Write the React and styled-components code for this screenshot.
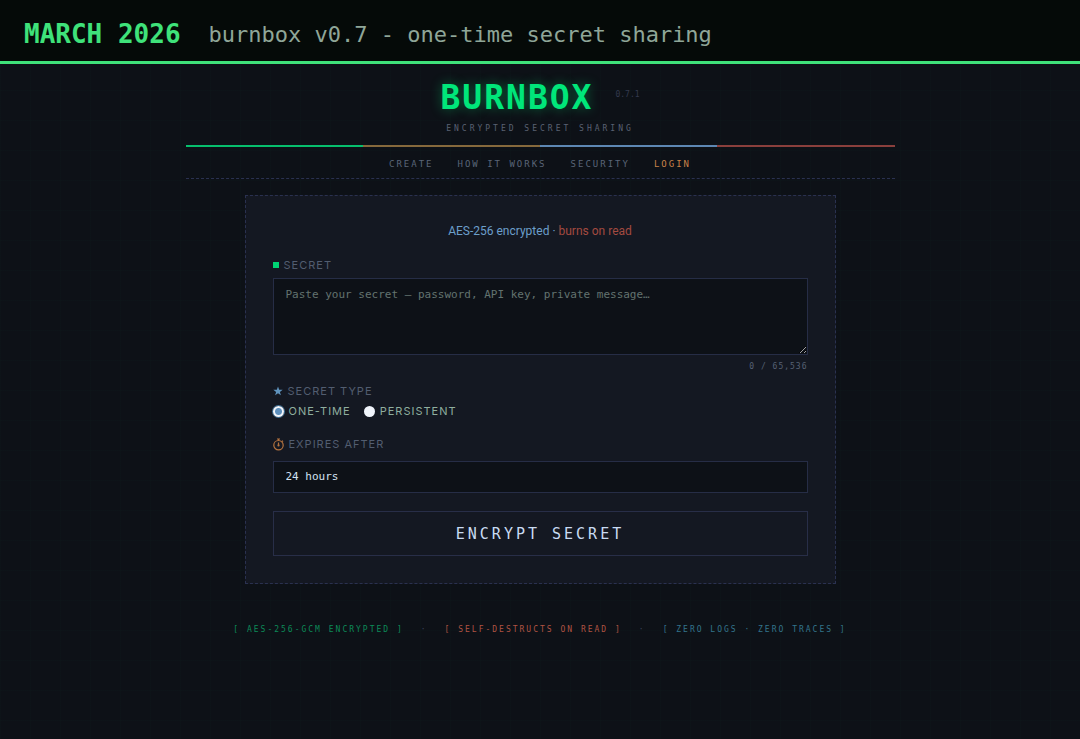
import React, { useState } from "react";
import styled, { createGlobalStyle } from "styled-components";

const MAX_LENGTH = 65536;

const navLinks = [
  { label: "CREATE", href: "#create" },
  { label: "HOW IT WORKS", href: "#how" },
  { label: "SECURITY", href: "#security" },
  { label: "LOGIN", href: "#login", accent: true },
];

const secretTypes = [
  { value: "once", label: "ONE-TIME" },
  { value: "persistent", label: "PERSISTENT" },
];

const App = () => {
  const [secret, setSecret] = useState("");
  const [type, setType] = useState("once");
  const [expiry, setExpiry] = useState("24");

  return (
    <>
      <GlobalStyle />
      <Banner>
        <BannerDate>MARCH 2026</BannerDate>
        <BannerText>burnbox v0.7 - one-time secret sharing</BannerText>
      </Banner>
      <Page>
        <Header>
          <TitleRow>
            <Title>BURNBOX</Title>
            <Version>0.7.1</Version>
          </TitleRow>
          <Tagline>ENCRYPTED SECRET SHARING</Tagline>
        </Header>
        <Stripe>
          <StripePart color="#06bf6d" />
          <StripePart color="#86693c" />
          <StripePart color="#5d87b3" />
          <StripePart color="#8a3f3c" />
        </Stripe>
        <Nav>
          {navLinks.map((link) => (
            <NavLink key={link.label} href={link.href} $accent={link.accent}>
              {link.label}
            </NavLink>
          ))}
        </Nav>
        <Card onSubmit={(e) => e.preventDefault()}>
          <Intro>
            AES-256 encrypted · <Burns>burns on read</Burns>
          </Intro>

          <Label htmlFor="secret">
            <Square />
            SECRET
          </Label>
          <SecretInput
            id="secret"
            maxLength={MAX_LENGTH}
            placeholder="Paste your secret — password, API key, private message…"
            value={secret}
            onChange={(e) => setSecret(e.target.value)}
          />
          <Counter>
            {secret.length} / {MAX_LENGTH.toLocaleString("en-US")}
          </Counter>

          <TypeGroup>
            <Legend>
              <StarIcon viewBox="0 0 10 10" aria-hidden="true">
                <path d="M5 0.4 6.2 3.7 9.7 3.8 6.9 5.9 7.9 9.3 5 7.3 2.1 9.3 3.1 5.9 0.3 3.8 3.8 3.7Z" />
              </StarIcon>
              SECRET TYPE
            </Legend>
            <RadioRow>
              {secretTypes.map((t) => (
                <RadioLabel key={t.value}>
                  <Radio
                    type="radio"
                    name="type"
                    value={t.value}
                    checked={type === t.value}
                    onChange={() => setType(t.value)}
                  />
                  {t.label}
                </RadioLabel>
              ))}
            </RadioRow>
          </TypeGroup>

          <Label htmlFor="expiry">
            <TimerIcon viewBox="0 0 11 13" aria-hidden="true">
              <circle cx="5.5" cy="7.2" r="4.7" />
              <path d="M5.5 4.4V7.8M4 1H7M5.5 1V2.5M9 2.6 10 3.6" />
              <circle cx="5.5" cy="7.4" r="0.5" />
            </TimerIcon>
            EXPIRES AFTER
          </Label>
          <Select
            id="expiry"
            value={expiry}
            onChange={(e) => setExpiry(e.target.value)}
          >
            <option value="1">1 hour</option>
            <option value="24">24 hours</option>
            <option value="168">7 days</option>
          </Select>

          <Submit type="submit">ENCRYPT SECRET</Submit>
        </Card>
        <Footer>
          <Badge color="#0c8a58">[ AES-256-GCM ENCRYPTED ]</Badge>
          <Dot>·</Dot>
          <Badge color="#b05343">[ SELF-DESTRUCTS ON READ ]</Badge>
          <Dot>·</Dot>
          <Badge color="#33748c">[ ZERO LOGS · ZERO TRACES ]</Badge>
        </Footer>
      </Page>
    </>
  );
};

export default App;

// Styled components
const mono = `"DejaVu Sans Mono", monospace`;
const sans = `Inter, sans-serif`;

const GlobalStyle = createGlobalStyle`
  * {
    box-sizing: border-box;
  }
  body {
    margin: 0;
    background-color: #0d1117;
    background-image:
      linear-gradient(rgba(0, 230, 118, 0.01) 1px, transparent 1px),
      linear-gradient(90deg, rgba(0, 230, 118, 0.01) 1px, transparent 1px);
    background-size: 30px 30px;
    color: #c9d6e8;
    font-family: ${sans};
  }
`;

const Banner = styled.div`
  display: flex;
  align-items: center;
  gap: 28px;
  min-height: 64px;
  padding: 7px 24px 0;
  background: #050a08;
  border-bottom: 3px solid #3fe27a;
  font-family: ${mono};
`;

const BannerDate = styled.strong`
  font-size: 26px;
  color: #3fe27a;
`;

const BannerText = styled.span`
  font-size: 22px;
  color: #8fa698;
`;

const Page = styled.div`
  max-width: 709px;
  margin: 0 auto;
`;

const Header = styled.header`
  padding: 14px 0 10px;
  text-align: center;
`;

const TitleRow = styled.div`
  display: flex;
  justify-content: center;
  gap: 22px;
`;

const Title = styled.h1`
  margin: 0;
  font-family: ${mono};
  font-size: 33px;
  line-height: 40px;
  letter-spacing: 2px;
  color: #00e67a;
  text-shadow: 0 0 12px rgba(0, 230, 118, 0.4);
`;

const Version = styled.span`
  font-family: ${mono};
  font-size: 8px;
  line-height: 34px;
  color: #343a4e;
`;

const Tagline = styled.p`
  margin: 5px 0 0;
  font-family: ${mono};
  font-size: 8px;
  line-height: 12px;
  letter-spacing: 3px;
  color: #5a6172;
`;

const Stripe = styled.div`
  display: flex;
  height: 2px;
`;

const StripePart = styled.div`
  flex: 1;
  background: ${(props) => props.color};
`;

const Nav = styled.nav`
  display: flex;
  justify-content: center;
  gap: 24px;
  padding: 10px 0 6px;
  border-bottom: 1px dashed #2a3150;
`;

const NavLink = styled.a`
  font-family: ${mono};
  font-size: 9px;
  line-height: 15px;
  letter-spacing: 2px;
  text-decoration: none;
  color: ${(props) => (props.$accent ? "#c88248" : "#5a6577")};
`;

const Card = styled.form`
  display: flex;
  flex-direction: column;
  max-width: 591px;
  margin: 16px auto 0;
  padding: 27px;
  background: #141822;
  border: 1px dashed #2a3150;
`;

const Intro = styled.p`
  margin: 0 0 18px;
  font-family: Roboto, sans-serif;
  font-size: 12px;
  line-height: 16px;
  text-align: center;
  color: #6c9fcb;
`;

const Burns = styled.span`
  color: #a34a40;
`;

const Label = styled.label`
  display: flex;
  align-items: center;
  gap: 5px;
  font-size: 11px;
  line-height: 16px;
  letter-spacing: 1px;
  color: #525d70;
`;

const Legend = styled(Label).attrs({ as: "legend" })`
  padding: 0;
`;

const Square = styled.span`
  width: 6px;
  height: 6px;
  background: #00d474;
`;

const SecretInput = styled.textarea`
  height: 77px;
  margin-top: 5px;
  padding: 8px 12px;
  background: #0d1117;
  border: 1px solid #262d46;
  border-radius: 0;
  outline: none;
  resize: vertical;
  font-family: ${mono};
  font-size: 11px;
  line-height: 16px;
  color: #c9d6e8;

  &::placeholder {
    color: #63736f;
  }
`;

const Counter = styled.div`
  margin-top: 5px;
  font-family: ${mono};
  font-size: 8px;
  line-height: 14px;
  letter-spacing: 1px;
  text-align: right;
  color: #566174;
`;

const TypeGroup = styled.fieldset`
  margin: 9px 0 17px;
  padding: 0;
  border: 0;
`;

const StarIcon = styled.svg`
  width: 10px;
  height: 10px;
  fill: #5f93bd;
`;

const TimerIcon = styled.svg`
  width: 11px;
  height: 13px;
  fill: none;
  stroke: #b5733f;
  stroke-width: 1.2;
`;

const RadioRow = styled.div`
  display: flex;
  gap: 13px;
  margin-top: 4px;
`;

const RadioLabel = styled.label`
  display: flex;
  align-items: center;
  gap: 5px;
  font-size: 11px;
  line-height: 16px;
  letter-spacing: 1px;
  color: #8fae9f;
`;

const Radio = styled.input`
  appearance: none;
  width: 11px;
  height: 11px;
  margin: 0;
  border-radius: 50%;
  background: #f0f4fb;

  &:checked {
    background: radial-gradient(circle, #5d8fbd 3px, #f0f4fb 4px);
    box-shadow: 0 0 0 1px #3f6f94;
  }
`;

const Select = styled.select`
  appearance: none;
  height: 32px;
  margin-top: 9px;
  padding: 0 12px 2px;
  background: #0d1117;
  border: 1px solid #262d46;
  border-radius: 0;
  font-family: ${mono};
  font-size: 11px;
  color: #d3e2f2;
`;

const Submit = styled.button`
  height: 45px;
  margin-top: 18px;
  background: transparent;
  border: 1px solid #282e48;
  font-family: ${mono};
  font-size: 15px;
  letter-spacing: 3px;
  color: #c9dbf2;
  cursor: pointer;
`;

const Footer = styled.footer`
  display: flex;
  justify-content: center;
  gap: 17px;
  padding: 39px 0 60px;
  font-family: ${mono};
  font-size: 8px;
  line-height: 14px;
  letter-spacing: 2px;
`;

const Badge = styled.span`
  color: ${(props) => props.color};
`;

const Dot = styled.span`
  color: #39425a;
`;
